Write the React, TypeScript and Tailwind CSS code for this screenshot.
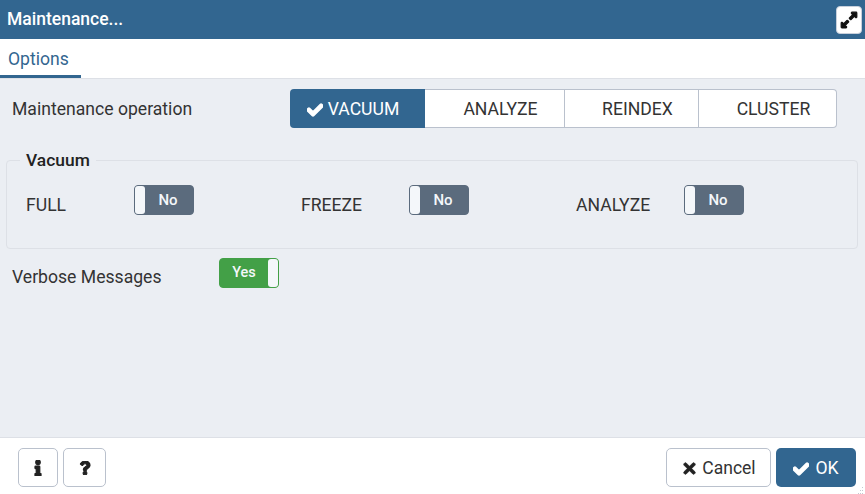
import { FaCheck, FaTimes, FaInfo, FaQuestion, FaExpandAlt } from 'react-icons/fa';

const operations = [
    { label: 'VACUUM', width: 'w-[135px]', active: true },
    { label: 'ANALYZE', width: 'w-[140px]', active: false },
    { label: 'REINDEX', width: 'w-[134px]', active: false },
    { label: 'CLUSTER', width: 'w-[138px]', active: false },
];

function Toggle({ on }: { on: boolean }) {
    if (on) {
        return (
            <div className="flex h-[30px] w-[60px] shrink-0 items-stretch justify-between rounded-[4px] border border-[#43a047] bg-[#43a047]">
                <span className="flex-1 pt-[1px] text-center text-[14.5px] leading-[26px] font-medium text-[#f4f7fa]">Yes</span>
                <span className="w-[10px] rounded-[3px] bg-[#f4f7fa]" />
            </div>
        );
    }
    return (
        <div className="flex h-[30px] w-[60px] shrink-0 items-stretch justify-between rounded-[4px] border border-[#5b6b7d] bg-[#5b6b7d]">
            <span className="w-[10px] rounded-[3px] bg-[#f4f7fa]" />
            <span className="flex-1 pt-[1px] pr-[2px] text-center text-[15px] leading-[26px] font-medium text-[#f4f7fa]">No</span>
        </div>
    );
}

function VacuumOption({ label }: { label: string }) {
    return (
        <div className="flex w-[275px] shrink-0 items-start">
            <span className="mt-[8px] w-[108px] text-[17.6px] leading-[24px] text-[#333]">{label}</span>
            <Toggle on={false} />
        </div>
    );
}

export default function App() {
    return (
        <div className="flex h-[494px] w-[865px] flex-col overflow-hidden bg-[#ebeef3] font-['Roboto',sans-serif] text-[#222]">
            {/* Title bar */}
            <div className="flex h-[39px] shrink-0 items-center justify-between bg-[#326690] pr-[3px] pl-[7px]">
                <span className="text-[17.5px] font-medium text-white">Maintenance...</span>
                <button className="flex h-[28px] w-[26px] items-center justify-center rounded-[4px] border border-[#c8d0dc] bg-white text-[#111]">
                    <FaExpandAlt className="h-[18px] w-[18px] shrink-0 stroke-[30]" />
                </button>
            </div>

            {/* Tabs */}
            <div className="h-[40px] shrink-0 border-b border-[#dde0e6] bg-white">
                <div className="h-[39px] w-[81px] border-b-[3px] border-[#326690] pl-[8px] text-[17.6px] leading-[41px] text-[#326690]">
                    Options
                </div>
            </div>

            {/* Form */}
            <div className="flex-1 px-[6px] pt-[10px]">
                <div className="flex items-center pl-[6px]">
                    <span className="w-[278px] pt-[2px] text-[17.6px] text-[#333]">Maintenance operation</span>
                    <div className="flex h-[39px]">
                        {operations.map((op) => (
                            <div
                                key={op.label}
                                className={`flex items-center justify-center pt-[2px] text-[17.6px] ${op.width} ${op.active
                                    ? 'rounded-l-[4px] bg-[#326690] pr-[9px] text-white'
                                    : 'border-y border-r border-[#bac1cd] bg-white pl-[12px] text-[#333] last:rounded-r-[4px]'
                                    }`}
                            >
                                {op.active && <FaCheck className="mr-[5px] h-[16px] w-[16px] stroke-[50]" />}
                                {op.label}
                            </div>
                        ))}
                    </div>
                </div>

                <fieldset className="mt-[23px] h-[98px] w-[852px] min-w-0 rounded-[4px] border border-[#dde0e6] px-[13px]">
                    <legend className="px-[6px] text-[17.4px] leading-[19px] font-medium text-[#222]">Vacuum</legend>
                    <div className="mt-[15px] ml-[6px] flex">
                        <VacuumOption label="FULL" />
                        <VacuumOption label="FREEZE" />
                        <VacuumOption label="ANALYZE" />
                    </div>
                </fieldset>

                <div className="mt-[9px] flex items-start pl-[6px]">
                    <span className="mt-[7px] w-[207px] text-[17.6px] leading-[24px] text-[#333]">Verbose Messages</span>
                    <Toggle on />
                </div>
            </div>

            {/* Footer */}
            <div className="relative flex h-[57px] shrink-0 items-start justify-between border-t border-[#dde0e6] bg-white pt-[10px] pr-[9px] pl-[18px]">
                <div className="flex gap-[5px]">
                    <button className="flex h-[39px] w-[40px] items-center justify-center rounded-[5px] border border-[#bac1cd] text-[#222]">
                        <FaInfo className="h-[16px] w-[16px] stroke-[40]" />
                    </button>
                    <button className="flex h-[39px] w-[43px] items-center justify-center rounded-[5px] border border-[#bac1cd] text-[#222]">
                        <FaQuestion className="h-[14px] w-[14px] stroke-[40]" />
                    </button>
                </div>
                <div className="flex gap-[5px]">
                    <button className="flex h-[39px] w-[105px] items-center justify-center rounded-[5px] border border-[#bac1cd] bg-white pt-[2px] text-[17.5px] text-[#333]">
                        <FaTimes className="mr-[4px] h-[17px] w-[17px] stroke-[20] text-[#222]" />
                        Cancel
                    </button>
                    <button className="flex h-[39px] w-[80px] items-center justify-center rounded-[5px] bg-[#326690] pt-[2px] text-[17.6px] text-white">
                        <FaCheck className="mr-[6px] h-[16px] w-[16px] stroke-[50]" />
                        OK
                    </button>
                </div>
                {/* resize grip */}
                <svg className="absolute right-0 bottom-0 h-[8px] w-[8px] text-[#c4c9d1]" viewBox="0 0 8 8" fill="currentColor">
                    <rect x="5" y="1" width="1" height="1" />
                    <rect x="3" y="4" width="1" height="1" />
                    <rect x="5" y="4" width="1" height="1" />
                    <rect x="1" y="7" width="1" height="1" />
                    <rect x="3" y="7" width="1" height="1" />
                    <rect x="5" y="7" width="1" height="1" />
                </svg>
            </div>
        </div>
    );
}
